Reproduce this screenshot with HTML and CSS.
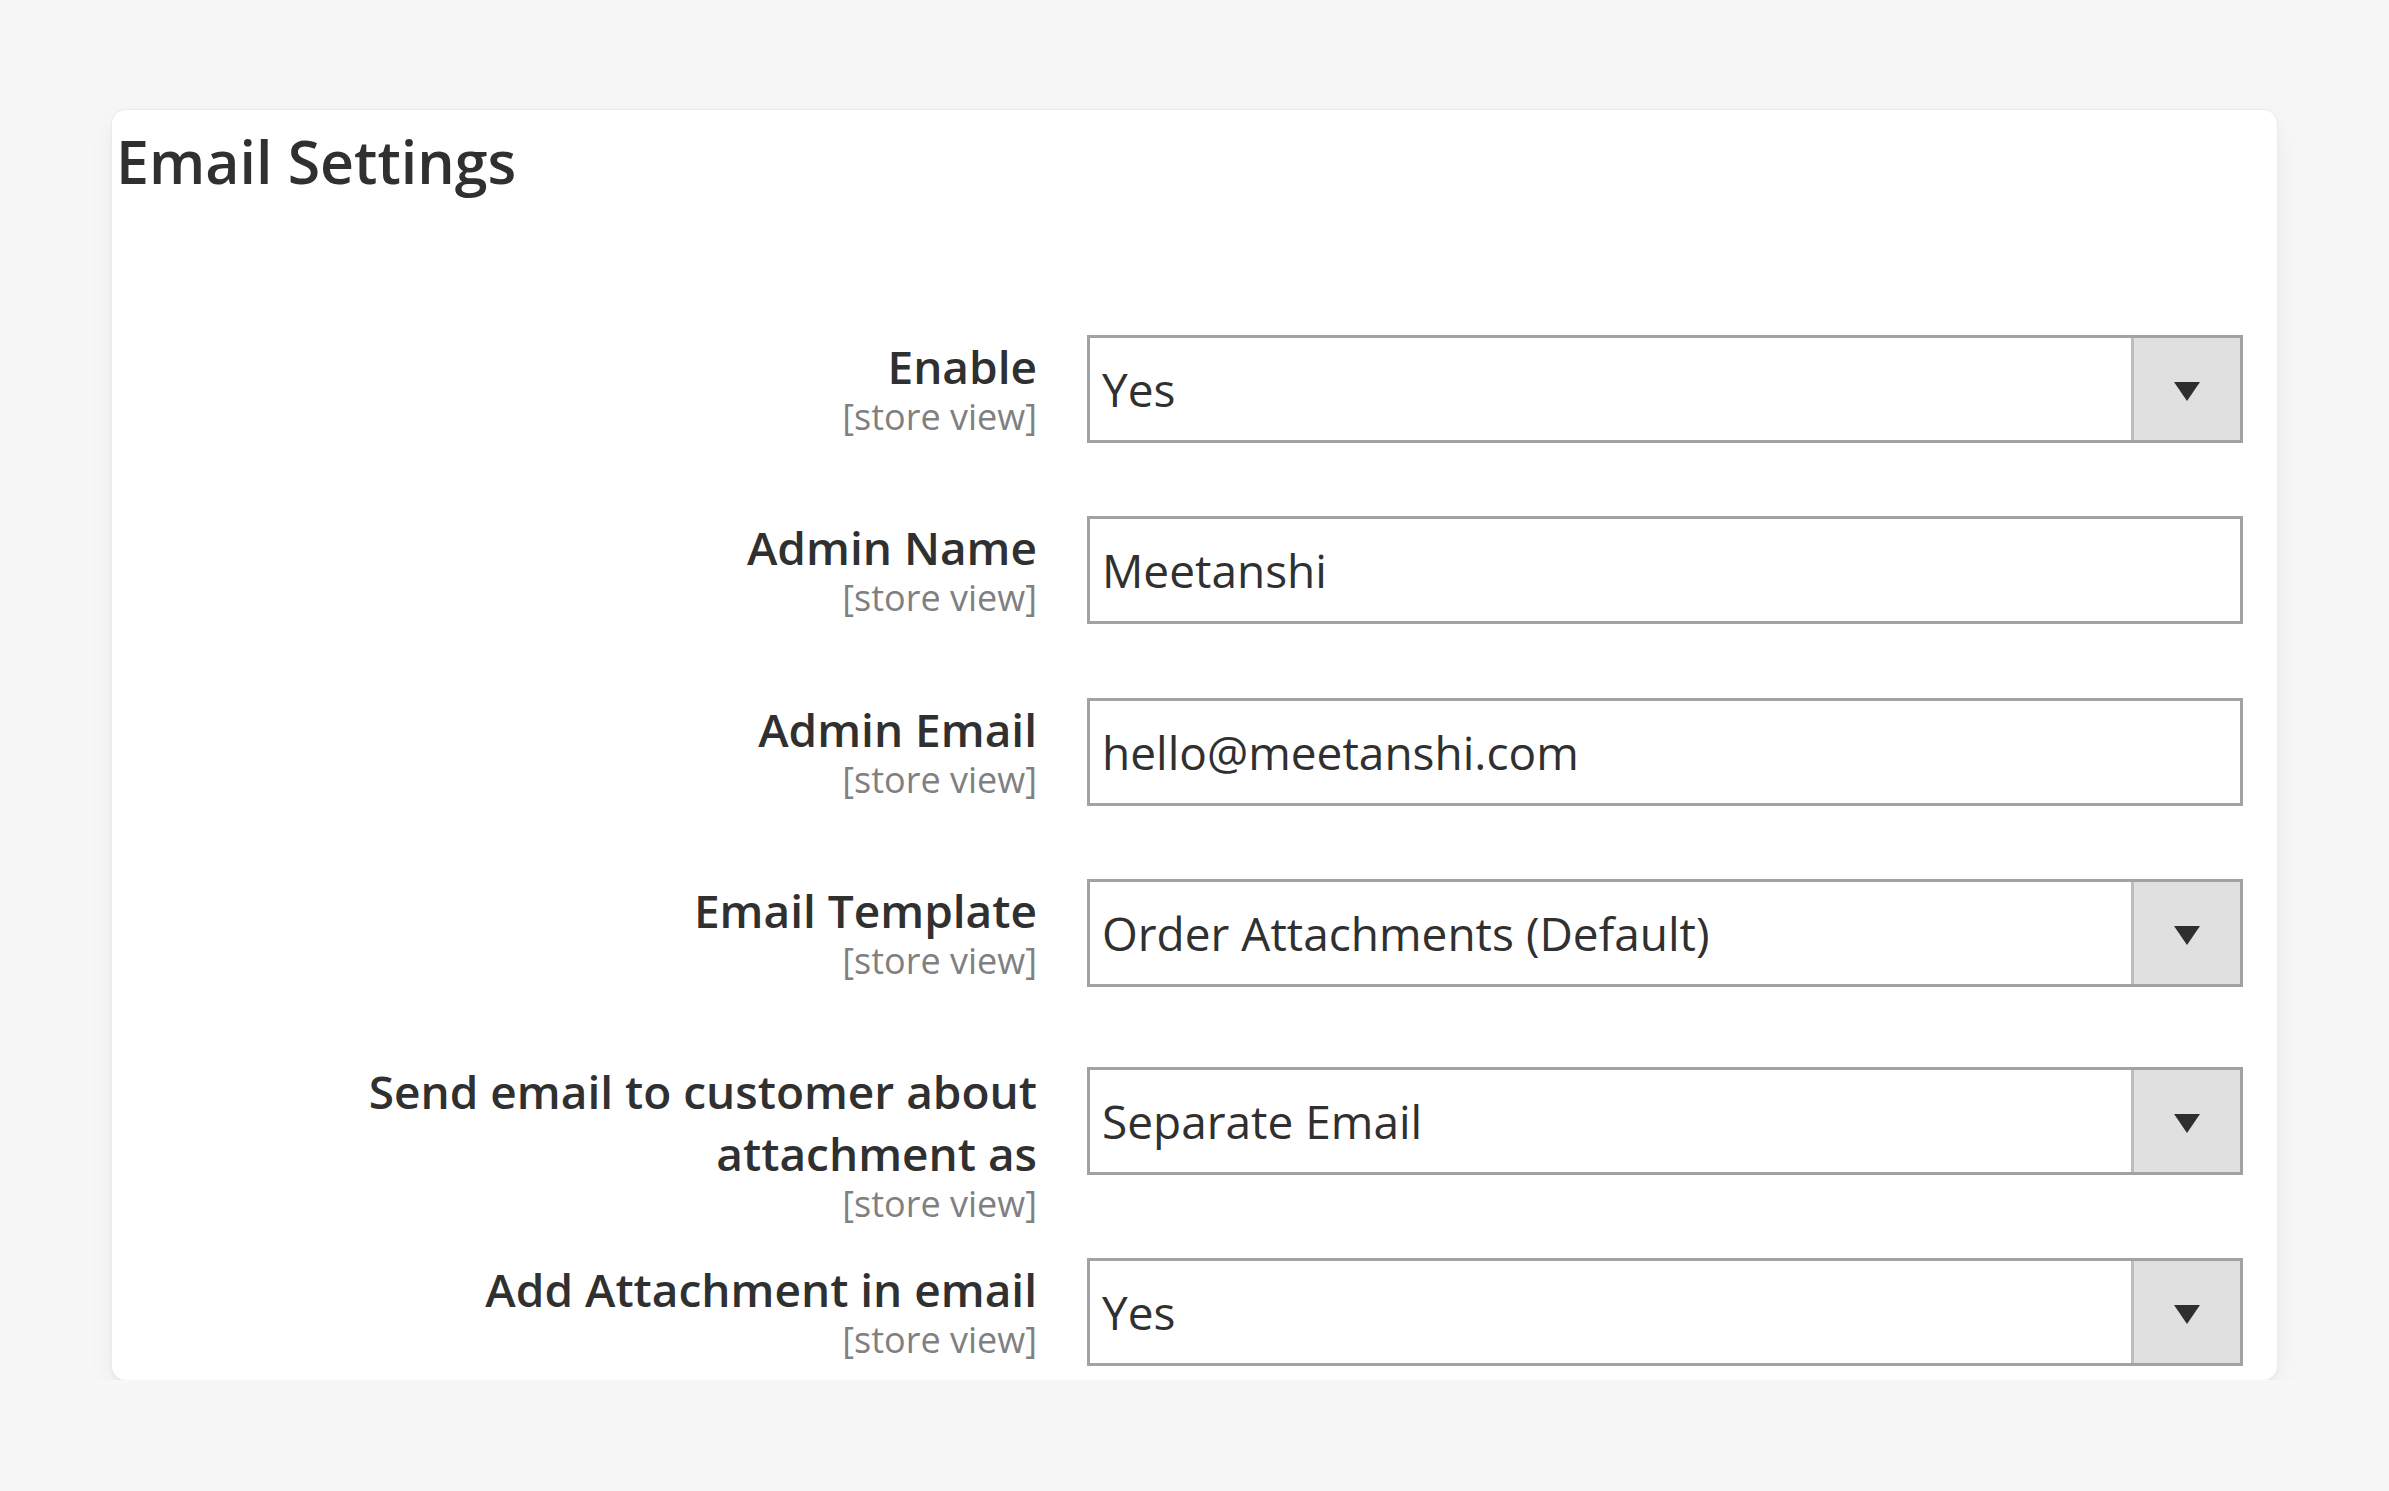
FILE: index.html
```html
<!DOCTYPE html>
<html lang="en">
<head>
<meta charset="utf-8">
<title>Email Settings</title>
<link rel="stylesheet" href="styles.css">
</head>
<body>
<div class="page">
  <section class="card">
    <h2 class="card-title">Email Settings</h2>
    <div class="fields">
      <div class="row row-enable">
        <div class="label"><span class="label-text">Enable</span><span class="scope">[store view]</span></div>
        <div class="control select"><span class="value">Yes</span><span class="select-btn"><span class="arrow"></span></span></div>
      </div>
      <div class="row row-name">
        <div class="label"><span class="label-text">Admin Name</span><span class="scope">[store view]</span></div>
        <div class="control input"><span class="value">Meetanshi</span></div>
      </div>
      <div class="row row-email">
        <div class="label"><span class="label-text">Admin Email</span><span class="scope">[store view]</span></div>
        <div class="control input"><span class="value">hello@meetanshi.com</span></div>
      </div>
      <div class="row row-template">
        <div class="label"><span class="label-text">Email Template</span><span class="scope">[store view]</span></div>
        <div class="control select"><span class="value">Order Attachments (Default)</span><span class="select-btn"><span class="arrow"></span></span></div>
      </div>
      <div class="row row-send">
        <div class="label label-shift"><span class="label-text">Send email to customer about<br>attachment as</span><span class="scope">[store view]</span></div>
        <div class="control select"><span class="value">Separate Email</span><span class="select-btn"><span class="arrow"></span></span></div>
      </div>
      <div class="row row-attach">
        <div class="label"><span class="label-text">Add Attachment in email</span><span class="scope">[store view]</span></div>
        <div class="control select"><span class="value">Yes</span><span class="select-btn"><span class="arrow"></span></span></div>
      </div>
    </div>
  </section>
</div>
</body>
</html>
```

FILE: styles.css
```css
html, body {
  margin: 0;
  padding: 0;
  background: #f7f7f7;
}

body {
  font-family: "Open Sans", "Noto Sans", "Liberation Sans", sans-serif;
  color: #303030;
}

.page {
  padding: 110px 112px 0 112px;
}

.card {
  background: #ffffff;
  border-radius: 14px;
  box-shadow: 0 0 0 1px #ebebeb, 0 3px 4px rgba(0, 0, 0, 0.04), 0 10px 28px rgba(0, 0, 0, 0.06);
  padding: 17px 34px 11px 4px;
  height: 1270px;
  box-sizing: border-box;
}

.card-title {
  margin: 0;
  font-size: 59px;
  line-height: 68px;
  font-weight: 600;
  color: #303030;
}

.fields {
  display: flex;
  flex-direction: column;
  margin-top: 140px;
}

.row {
  display: grid;
  grid-template-columns: 921px 1156px;
  column-gap: 50px;
  align-items: start;
}

.row-name { margin-top: 73px; }
.row-email { margin-top: 74px; }
.row-template { margin-top: 73px; }
.row-send { margin-top: 80px; }
.row-attach { margin-top: 35px; }

.label {
  display: flex;
  flex-direction: column;
  align-items: flex-end;
  text-align: right;
  white-space: nowrap;
}

.label-shift {
  margin-top: -7px;
}

.label-text {
  display: block;
  font-size: 46px;
  line-height: 62px;
  font-weight: 600;
  color: #303030;
}

.scope {
  display: block;
  font-size: 36px;
  line-height: 39px;
  font-weight: 400;
  color: #808080;
}

.control {
  height: 108px;
  box-sizing: border-box;
  border: 3px solid #a2a2a2;
  background: #ffffff;
  display: flex;
  align-items: center;
}

.value {
  flex: 1;
  padding-left: 12px;
  font-size: 46px;
  font-weight: 400;
  color: #303030;
  white-space: nowrap;
}

.select-btn {
  align-self: stretch;
  width: 106px;
  background: #e0e0e0;
  border-left: 3px solid #bdbdbd;
  display: flex;
  align-items: center;
  justify-content: center;
}

.arrow {
  width: 0;
  height: 0;
  border-left: 13px solid transparent;
  border-right: 13px solid transparent;
  border-top: 19px solid #2e2e2e;
  margin-top: 4px;
}
```
